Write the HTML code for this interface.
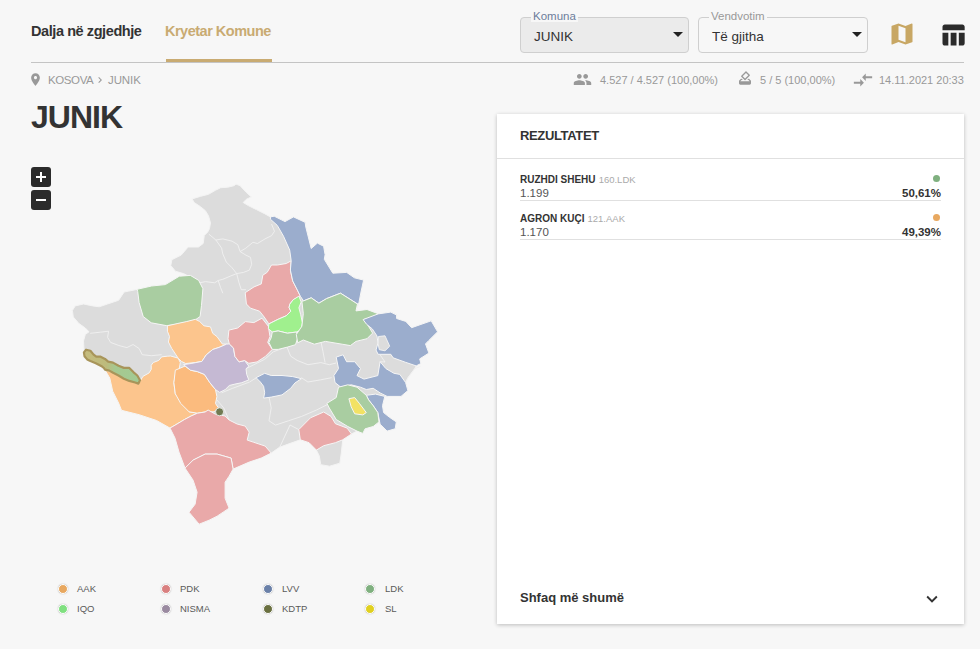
<!DOCTYPE html>
<html><head><meta charset="utf-8">
<style>
*{margin:0;padding:0;box-sizing:border-box}
html,body{width:980px;height:649px;overflow:hidden;background:#f7f7f7;font-family:"Liberation Sans",sans-serif;color:#333}
.abs{position:absolute;white-space:nowrap}
.tab1{left:31px;top:23px;font-size:14.5px;font-weight:bold;color:#333;letter-spacing:-0.42px}
.tab2{left:165px;top:23px;font-size:14.5px;font-weight:bold;color:#c9ab72;letter-spacing:-0.5px}
.uline{left:166px;top:59px;width:106px;height:3px;background:#c9ab72}
.hline{left:31px;top:62px;width:933px;height:1px;background:#c4c4c4}
.sel{border:1px solid #cfcfcf;border-radius:4px}
.lbl{font-size:11.5px;background:#f7f7f7;padding:0 2px}
.crumb{top:74px;font-size:11.5px;color:#999}
.title{left:31px;top:99px;font-size:32px;font-weight:bold;color:#333;letter-spacing:-1px}
.stat{font-size:11px;color:#999;top:74px}
.card{left:497px;top:114px;width:467px;height:510px;background:#fff;box-shadow:0 1px 4px rgba(0,0,0,.24)}
.zb{left:31px;width:20px;height:20px;background:#2b2b2b;border-radius:3px}
.leg{font-size:9.5px;color:#5a5a5a}
.dot{width:10px;height:10px;border-radius:50%;border:1.5px solid #fff;box-shadow:0 0 1.5px rgba(0,0,0,.28)}
</style></head><body>
<div class="abs tab1">Dalja në zgjedhje</div>
<div class="abs tab2">Kryetar Komune</div>
<div class="abs uline"></div>
<div class="abs hline"></div>

<!-- selects -->
<div class="abs sel" style="left:520px;top:17px;width:169px;height:36px;background:#ebebeb"></div>
<div class="abs lbl" style="left:531px;top:10px;color:#6d7d9b">Komuna</div>
<div class="abs" style="left:534px;top:29px;font-size:13.5px;color:#333">JUNIK</div>
<svg class="abs" style="left:673px;top:32px" width="10" height="6"><path d="M0 0h10L5 5z" fill="#222"/></svg>

<div class="abs sel" style="left:698px;top:17px;width:170px;height:36px;background:#f7f7f7"></div>
<div class="abs lbl" style="left:709px;top:10px;color:#999">Vendvotim</div>
<div class="abs" style="left:712px;top:29px;font-size:13.5px;color:#333">Të gjitha</div>
<svg class="abs" style="left:852px;top:32px" width="10" height="6"><path d="M0 0h10L5 5z" fill="#222"/></svg>

<svg class="abs" style="left:888px;top:20px" width="28" height="28" viewBox="0 0 24 24"><path fill="#c8a764" d="M20.5 3l-.16.03L15 5.1 9 3 3.36 4.9c-.21.07-.36.25-.36.48V20.5c0 .28.22.5.5.5l.16-.03L9 18.9l6 2.1 5.64-1.9c.21-.07.36-.25.36-.48V3.5c0-.28-.22-.5-.5-.5zM15 19l-6-2.11V5l6 2.11V19z"/></svg>
<svg class="abs" style="left:939px;top:21px" width="28" height="28" viewBox="0 0 24 24"><path fill="#2b2b2b" d="M10 10.02h5V21h-5zM17 21h3c1.1 0 2-.9 2-2v-9h-5v11zm3-18H5c-1.1 0-2 .9-2 2v3h19V5c0-1.1-.9-2-2-2zM3 19c0 1.1.9 2 2 2h3V10H3v9z"/></svg>

<!-- breadcrumb -->
<svg class="abs" style="left:28px;top:72px" width="15" height="15" viewBox="0 0 24 24"><path fill="#999" d="M12 2C8.13 2 5 5.13 5 9c0 5.25 7 13 7 13s7-7.75 7-13c0-3.87-3.13-7-7-7zm0 9.5c-1.38 0-2.5-1.12-2.5-2.5s1.12-2.5 2.5-2.5 2.5 1.12 2.5 2.5-1.12 2.5-2.5 2.5z"/></svg>
<div class="abs crumb" style="left:48px;letter-spacing:-0.4px">KOSOVA</div>
<svg class="abs" style="left:94px;top:74px" width="12" height="12" viewBox="0 0 24 24"><path fill="#999" d="M10 6L8.59 7.41 13.17 12l-4.58 4.59L10 18l6-6z"/></svg>
<div class="abs crumb" style="left:108px;letter-spacing:-0.1px">JUNIK</div>
<div class="abs title">JUNIK</div>

<!-- stats -->
<svg class="abs" style="left:573px;top:70px" width="19" height="19" viewBox="0 0 24 24"><path fill="#999" d="M16 11c1.66 0 2.99-1.34 2.99-3S17.66 5 16 5c-1.66 0-3 1.34-3 3s1.34 3 3 3zm-8 0c1.66 0 2.99-1.34 2.99-3S9.66 5 8 5C6.34 5 5 6.34 5 8s1.34 3 3 3zm0 2c-2.33 0-7 1.17-7 3.5V19h14v-2.5c0-2.33-4.67-3.5-7-3.5zm8 0c-.29 0-.62.02-.97.05 1.16.84 1.97 1.97 1.97 3.45V19h6v-2.5c0-2.33-4.67-3.5-7-3.5z"/></svg>
<div class="abs stat" style="left:600px">4.527 / 4.527 (100,00%)</div>
<svg class="abs" style="left:737px;top:70px" width="16" height="16" viewBox="0 0 24 24"><path fill="#999" d="M18 13h-.68l-2 2h1.91L19 17H5l1.78-2h2.05l-2-2H6l-3 3v4c0 1.1.89 2 1.99 2H19c1.1 0 2-.89 2-2v-4l-3-3zm-1-5.05l-4.95 4.95-3.54-3.54 4.95-4.95L17 7.95zm-4.24-5.66L6.39 8.66c-.39.39-.39 1.02 0 1.41l4.95 4.95c.39.39 1.02.39 1.41 0l6.36-6.36c.39-.39.39-1.02 0-1.41L14.16 2.3c-.38-.4-1.01-.4-1.4-.01z"/></svg>
<div class="abs stat" style="left:760px">5 / 5 (100,00%)</div>
<svg class="abs" style="left:852px;top:69px" width="22" height="22" viewBox="0 0 24 24"><path fill="#999" d="M9.01 14H2v2h7.01v3L13 15l-3.99-4v3zm5.98-1v-3H22V8h-7.01V5L11 9l3.99 4z"/></svg>
<div class="abs stat" style="left:879px">14.11.2021 20:33</div>

<!-- zoom -->
<div class="abs zb" style="top:167px"><svg width="20" height="20"><path d="M10 5v10M5 10h10" stroke="#fff" stroke-width="2"/></svg></div>
<div class="abs zb" style="top:190px"><svg width="20" height="20"><path d="M5 10h10" stroke="#fff" stroke-width="2"/></svg></div>

<!-- MAP -->
<svg class="abs" id="map" style="left:0;top:0" width="490" height="560" viewBox="0 0 490 560">
<polygon points="192.1,198.9 200.3,196.4 208.5,194.3 215.6,190.2 220.7,187.7 227.9,187.2 234.0,185.7 236.0,184.1 240.1,185.7 246.2,192.3 251.3,196.9 246.2,199.4 243.2,202.5 248.3,205.6 256.4,209.6 264.6,213.7 270.4,216.9 274.2,216.2 285.0,221.6 293.5,216.9 305.1,222.3 305.8,227.0 311.2,248.5 317.4,243.1 323.6,246.2 325.1,254.7 324.3,259.3 332.8,273.2 346.7,272.4 354.4,277.8 363.6,280.1 361.0,292.0 359.0,302.4 356.0,310.9 363.1,319.6 378.1,313.9 390.8,312.1 396.6,315.0 396.6,318.5 405.8,321.4 411.6,327.7 431.2,320.8 437.6,331.8 428.9,340.4 425.5,343.9 428.9,353.1 419.7,358.9 420.9,363.5 416.2,365.9 414.8,368.6 407.9,377.9 405.6,382.5 407.9,390.6 401.0,396.4 387.1,396.4 384.8,396.4 382.5,405.7 383.6,412.6 389.4,417.2 396.3,421.9 395.2,428.8 387.1,431.1 380.1,424.2 379.0,421.9 373.2,426.5 365.1,428.8 362.8,433.4 357.0,431.1 351.5,434.0 342.7,439.8 341.3,453.0 339.8,463.2 329.6,466.2 320.8,464.7 319.3,455.9 316.4,450.1 309.1,442.7 300.3,439.8 279.8,447.1 271.2,453.1 261.2,458.1 249.2,462.1 233.1,469.1 229.1,476.2 225.1,482.2 225.1,498.2 229.1,508.2 223.1,512.2 217.1,516.2 209.1,520.2 199.1,524.2 189.0,512.2 195.1,504.2 197.1,492.2 193.1,480.2 185.0,468.1 179.0,452.1 175.0,438.1 170.0,428.1 156.6,420.5 139.1,414.7 121.5,410.3 118.6,403.0 112.7,391.2 109.8,378.1 105.0,370.0 100.8,367.2 93.9,363.0 86.9,358.9 84.2,355.4 84.2,352.6 83.5,341.0 85.3,334.5 89.0,331.8 85.3,328.0 78.9,323.5 73.3,317.0 72.4,310.5 75.2,305.9 83.5,304.0 92.7,305.9 99.2,306.8 107.5,304.0 118.6,300.3 124.2,292.0 128.8,291.1 138.0,289.2 151.5,286.0 165.4,284.6 179.3,276.2 188.1,275.9 183.5,273.6 175.4,271.2 170.8,265.5 171.9,259.7 181.2,255.1 188.1,247.0 198.5,247.0 203.2,243.5 204.3,235.4 207.8,231.9 209.5,228.6 210.5,222.9 208.5,215.8 205.4,210.7 200.3,206.6 194.2,202.5" fill="#dcdcdc" stroke="#f4f4f4" stroke-width="1" stroke-linejoin="round"/>
<polyline points="208.9,234.2 215.9,240.0 221.6,248.1 222.8,253.9 226.3,262.0 232.1,267.8 236.7,273.6 230.9,275.9 222.8,279.3 218.2,280.5 214.7,282.8 205.5,281.6 199.7,282.8" fill="none" stroke="#f0f0f0" stroke-width="0.9" stroke-linejoin="round"/>
<polyline points="215.9,240.0 222.8,238.9 232.1,241.2 237.8,244.7 240.1,251.6 245.9,255.1 250.5,257.4 251.7,264.3 249.4,270.1 243.6,272.4 236.7,273.6" fill="none" stroke="#f0f0f0" stroke-width="0.9" stroke-linejoin="round"/>
<polyline points="240.1,251.6 245.9,248.1 252.9,242.3 257.5,243.5 265.0,238.9 271.5,235.7 274.5,231.3 271.5,224.0" fill="none" stroke="#f0f0f0" stroke-width="0.9" stroke-linejoin="round"/>
<polyline points="218.2,280.5 220.5,287.4 222.8,293.2" fill="none" stroke="#f0f0f0" stroke-width="0.9" stroke-linejoin="round"/>
<polyline points="236.7,273.6 239.0,282.8 241.3,289.7 245.9,289.7" fill="none" stroke="#f0f0f0" stroke-width="0.9" stroke-linejoin="round"/>
<polyline points="90.2,333.3 100.4,332.2 108.6,331.2 107.6,337.3 110.6,342.4 118.8,345.5 126.9,347.6 133.1,344.5 139.2,348.6 142.2,354.7 151.4,355.7 161.6,354.7" fill="none" stroke="#f0f0f0" stroke-width="0.9" stroke-linejoin="round"/>
<polyline points="245.3,369.0 253.9,364.7 264.7,359.3 273.3,351.8 282.0,348.5 294.9,343.1 303.5,338.8 314.3,341.0 325.1,338.8 333.7,341.0 350.0,345.0" fill="none" stroke="#f0f0f0" stroke-width="0.9" stroke-linejoin="round"/>
<polyline points="221.6,392.8 232.4,388.4 249.6,382.0 256.0,378.0" fill="none" stroke="#f0f0f0" stroke-width="0.9" stroke-linejoin="round"/>
<polyline points="217.0,400.0 223.7,407.9 229.1,420.0" fill="none" stroke="#f0f0f0" stroke-width="0.9" stroke-linejoin="round"/>
<polyline points="269.0,397.0 271.2,407.9 269.0,420.8 275.5,425.1 288.4,420.8 301.4,416.5 316.5,410.0 329.4,403.5" fill="none" stroke="#f0f0f0" stroke-width="0.9" stroke-linejoin="round"/>
<polyline points="301.4,377.7 307.9,382.0 320.8,379.8 331.6,377.7" fill="none" stroke="#f0f0f0" stroke-width="0.9" stroke-linejoin="round"/>
<polyline points="286.3,345.3 290.6,356.1 297.1,360.4 307.9,364.7 320.8,362.6 329.4,364.7 336.0,363.0" fill="none" stroke="#f0f0f0" stroke-width="0.9" stroke-linejoin="round"/>
<polyline points="320.8,341.0 323.0,351.8 325.1,362.6" fill="none" stroke="#f0f0f0" stroke-width="0.9" stroke-linejoin="round"/>
<polyline points="298.8,429.6 290.0,425.0 279.8,447.1" fill="none" stroke="#f0f0f0" stroke-width="0.9" stroke-linejoin="round"/>
<polyline points="380.1,354.8 385.0,362.0 380.1,361.7" fill="none" stroke="#f0f0f0" stroke-width="0.9" stroke-linejoin="round"/>
<polyline points="420.6,366.3 414.8,368.6 407.9,377.9 405.6,382.5" fill="none" stroke="#f0f0f0" stroke-width="0.9" stroke-linejoin="round"/>
<polygon points="137.1,289.3 151.5,286.0 165.4,284.6 179.3,276.2 190.4,275.4 198.7,280.4 202.9,288.7 201.5,305.4 200.1,316.5 195.4,319.8 186.8,322.2 177.0,324.6 166.3,325.6 151.2,322.8 143.2,316.5 139.1,302.6 137.7,291.5" fill="#a9cda1" stroke="#f6f6f6" stroke-width="1" stroke-linejoin="round"/>
<polygon points="167.4,325.8 177.1,323.6 186.8,321.5 195.4,319.3 199.7,321.5 204.0,325.8 210.5,326.9 212.7,333.3 217.0,336.6 222.4,344.1 226.7,344.1 219.1,347.4 212.7,349.5 206.2,354.9 201.9,361.4 195.4,362.5 185.7,363.5 181.4,361.4 178.1,358.1 176.0,354.9 171.7,348.4 168.4,342.0 169.5,336.6 167.4,331.2" fill="#fcc58d" stroke="#f6f6f6" stroke-width="1" stroke-linejoin="round"/>
<polygon points="151.2,365.3 153.3,362.5 158.8,360.4 161.6,356.9 167.2,356.2 170.6,356.0 178.1,358.1 180.3,362.5 179.2,368.9 175.3,375.0 173.9,382.7 175.3,393.8 183.0,403.0 189.1,411.8 197.4,413.2 191.1,416.0 184.5,419.5 177.0,424.0 170.0,428.1 156.6,420.5 139.1,414.7 121.5,410.3 118.6,403.0 112.7,391.2 109.8,378.1 105.0,370.0 111.9,372.0 121.7,376.9 128.6,380.4 135.6,382.5 139.7,381.8 142.9,376.4 149.1,372.9 151.2,369.4" fill="#fcc58d" stroke="#f6f6f6" stroke-width="1" stroke-linejoin="round"/>
<polygon points="175.3,370.2 185.0,366.1 190.5,370.2 197.4,371.6 204.4,374.4 209.9,382.7 215.5,389.6 216.9,396.6 215.5,403.5 218.3,407.7 214.1,411.8 205.8,411.8 197.4,413.2 189.1,411.8 180.8,403.5 175.3,393.8 173.9,382.7" fill="#fbbb7e" stroke="#f6f6f6" stroke-width="1" stroke-linejoin="round"/>
<polygon points="183.5,364.6 191.1,363.5 201.9,361.4 206.2,354.9 212.7,349.5 219.1,347.4 226.7,344.1 229.3,343.9 233.5,348.0 234.9,356.4 239.1,361.9 244.6,360.5 248.8,366.1 246.0,368.8 246.7,374.4 248.8,379.9 241.8,382.7 234.9,384.1 229.3,385.5 225.2,389.6 219.6,392.4 215.5,389.6 209.9,382.7 204.4,374.4 197.4,371.6 190.5,370.2" fill="#c5b9d3" stroke="#f6f6f6" stroke-width="1" stroke-linejoin="round"/>
<polygon points="170.0,428.1 177.0,424.0 184.5,419.5 191.1,416.0 197.4,413.2 205.1,412.0 208.1,410.0 215.1,414.0 225.1,416.0 229.1,420.0 237.1,424.0 245.2,426.1 249.2,432.1 247.2,440.1 253.2,442.1 265.2,446.1 271.2,453.1 261.2,458.1 249.2,462.1 233.1,469.1 231.1,458.1 217.1,454.1 205.1,454.1 193.1,460.1 185.0,468.1 179.0,452.1 175.0,438.1" fill="#e9a9a9" stroke="#f6f6f6" stroke-width="1" stroke-linejoin="round"/>
<polygon points="185.0,468.1 193.1,460.1 205.1,454.1 217.1,454.1 231.1,458.1 233.1,469.1 229.1,476.2 225.1,482.2 225.1,498.2 229.1,508.2 223.1,512.2 217.1,516.2 209.1,520.2 199.1,524.2 189.0,512.2 195.1,504.2 197.1,492.2 193.1,480.2" fill="#e9a9a9" stroke="#f6f6f6" stroke-width="1" stroke-linejoin="round"/>
<polygon points="271.5,265.0 277.4,265.0 286.2,263.5 291.2,260.8 290.4,270.1 292.7,280.9 297.4,290.1 300.4,296.3 293.2,299.7 289.7,304.3 289.1,307.7 290.8,311.2 286.2,315.8 278.1,319.3 268.9,323.9 264.2,317.0 259.6,311.2 250.5,308.2 246.4,304.0 245.2,292.7 254.0,286.9 261.3,283.9 262.8,275.2 267.2,272.3" fill="#e9a9a9" stroke="#f6f6f6" stroke-width="1" stroke-linejoin="round"/>
<polygon points="228.9,330.1 237.7,328.0 245.3,321.6 253.9,322.6 262.0,318.2 268.3,326.2 270.0,336.6 267.7,342.4 272.3,349.4 265.4,356.4 257.1,361.9 248.8,363.3 244.6,360.5 239.1,361.9 234.9,356.4 233.5,348.0 229.3,343.9 228.0,338.8" fill="#e9a9a9" stroke="#f6f6f6" stroke-width="1" stroke-linejoin="round"/>
<polygon points="298.8,429.6 310.5,417.8 323.7,412.0 331.0,416.4 335.4,423.7 347.1,428.1 351.5,434.0 342.7,439.8 335.4,442.7 323.7,445.7 316.4,450.1 309.1,442.7 300.3,439.8" fill="#e9a9a9" stroke="#f6f6f6" stroke-width="1" stroke-linejoin="round"/>
<polygon points="270.4,216.9 274.2,216.2 285.0,221.6 293.5,216.9 305.1,222.3 305.8,227.0 311.2,248.5 317.4,243.1 323.6,246.2 325.1,254.7 324.3,259.3 332.8,273.2 346.7,272.4 354.4,277.8 363.6,280.1 361.0,292.0 359.0,302.4 357.5,304.0 340.5,293.2 326.6,298.6 318.9,303.2 311.2,297.8 303.5,300.9 300.4,296.3 297.4,290.1 292.7,280.9 290.4,270.1 291.2,260.8 289.7,250.1 283.5,236.2 277.3,225.4 270.4,219.2" fill="#9badcd" stroke="#f6f6f6" stroke-width="1" stroke-linejoin="round"/>
<polygon points="289.7,304.3 293.2,299.7 298.9,296.2 301.2,302.0 298.9,307.7 300.7,314.7 302.4,322.8 301.2,329.7 296.6,332.0 287.4,333.2 278.1,330.9 272.3,332.0 268.3,328.6 268.9,323.9 278.1,319.3 286.2,315.8 290.8,311.2 289.1,307.7" fill="#a0f08e" stroke="#f6f6f6" stroke-width="1" stroke-linejoin="round"/>
<polygon points="272.3,332.0 278.1,330.9 287.4,333.2 296.6,332.0 297.8,337.8 295.5,344.7 287.4,347.1 278.1,349.4 272.3,349.4 268.9,342.4 271.2,337.8" fill="#a9cda1" stroke="#f6f6f6" stroke-width="1" stroke-linejoin="round"/>
<polygon points="301.9,301.2 303.5,300.9 311.2,297.8 318.9,303.2 326.6,298.6 340.5,293.2 357.5,304.0 356.0,310.9 367.0,309.5 378.2,313.7 375.4,317.9 364.3,319.2 372.6,333.1 367.0,338.7 356.0,341.4 350.4,345.6 342.1,344.2 325.4,341.4 314.3,344.2 303.3,340.0 297.7,342.8 296.3,334.5 301.9,326.2 303.3,313.7" fill="#a9cda1" stroke="#f6f6f6" stroke-width="1" stroke-linejoin="round"/>
<polygon points="363.1,319.6 378.1,313.9 390.8,312.1 396.6,315.0 396.6,318.5 405.8,321.4 411.6,327.7 431.2,320.8 437.6,331.8 428.9,340.4 425.5,343.9 428.9,353.1 419.7,358.9 420.9,363.5 416.2,365.9 405.8,362.4 393.1,357.8 390.8,354.3 378.1,354.3 376.0,350.0 378.0,343.0 377.0,336.0 372.3,328.9 366.6,324.3" fill="#9badcd" stroke="#f6f6f6" stroke-width="1" stroke-linejoin="round"/>
<polygon points="256.1,377.7 264.7,373.3 271.2,375.5 282.0,375.5 292.8,376.6 301.4,378.7 294.9,383.0 290.6,388.4 282.0,394.9 271.2,397.1 263.6,398.1 264.7,392.8 263.6,386.3 260.4,382.0" fill="#9badcd" stroke="#f6f6f6" stroke-width="1" stroke-linejoin="round"/>
<polygon points="336.2,357.1 343.1,354.8 346.6,361.7 354.7,361.7 360.5,368.6 357.0,375.6 364.0,379.1 377.8,375.6 380.1,361.7 385.9,368.6 394.0,373.3 399.8,374.4 405.6,382.5 407.9,390.6 401.0,396.4 387.1,396.4 380.1,392.9 373.2,388.3 366.3,389.5 360.5,387.2 351.2,384.8 340.8,387.2 335.0,382.5 333.9,375.6 338.5,368.6" fill="#9badcd" stroke="#f6f6f6" stroke-width="1" stroke-linejoin="round"/>
<polygon points="366.3,395.3 375.5,394.1 384.8,396.4 382.5,405.7 383.6,412.6 389.4,417.2 396.3,421.9 395.2,428.8 387.1,431.1 380.1,424.2 377.8,412.6 373.2,405.7 368.6,399.9" fill="#9badcd" stroke="#f6f6f6" stroke-width="1" stroke-linejoin="round"/>
<polygon points="338.5,387.2 347.8,384.8 357.0,387.2 366.3,395.3 368.6,399.9 373.2,405.7 377.8,412.6 379.0,421.9 373.2,426.5 365.1,428.8 362.8,433.4 357.0,431.1 347.8,426.5 336.2,419.5 329.3,408.0 326.9,403.3 336.2,397.6" fill="#a9cda1" stroke="#f6f6f6" stroke-width="1" stroke-linejoin="round"/>
<polygon points="348.9,398.7 354.7,397.6 359.3,403.3 366.3,412.6 362.8,414.9 354.7,413.8 351.2,406.8" fill="#f2e264" stroke="#f6f6f6" stroke-width="1" stroke-linejoin="round"/>
<polygon points="378.5,336.5 385,335.8 389.7,346.2 385,350.8 379.3,349.7 378.1,343.9" fill="#dcdcdc" stroke="#f4f4f4" stroke-width="0.9"/>
<circle cx="219.6" cy="411.8" r="4" fill="#707a52" stroke="#f6f6f6" stroke-width="0.8"/>
<defs><linearGradient id="jg" x1="0" y1="0" x2="1" y2="0"><stop offset="0" stop-color="#c6bc7e"/><stop offset="0.4" stop-color="#bdbb7c"/><stop offset="0.55" stop-color="#a6c890"/><stop offset="1" stop-color="#a2cb94"/></linearGradient></defs>
<polygon points="83.9,352.4 86.1,349.7 90.4,350.8 93.6,354.6 96.3,356.7 100.6,356.7 105.0,358.9 108.2,361.6 113.0,362.6 118.5,365.8 123.9,367.9 129.3,367.9 133.6,372.3 137.3,375.5 140.0,380.3 138.4,383.6 135.2,382.5 129.3,380.9 123.9,378.7 118.5,375.5 113.1,372.8 109.3,370.6 105.0,369.6 103.9,368.0 101.2,365.9 95.8,363.2 90.4,361.0 87.2,359.4 84.5,356.2" fill="url(#jg)" stroke="#a8955a" stroke-width="2.2" stroke-linejoin="round"/>
</svg>

<!-- legend -->
<div class="abs dot" style="left:57.5px;top:583.5px;background:#e8a860"></div><div class="abs leg" style="left:77px;top:583px">AAK</div>
<div class="abs dot" style="left:160.5px;top:583.5px;background:#d98080"></div><div class="abs leg" style="left:180px;top:583px">PDK</div>
<div class="abs dot" style="left:262.5px;top:583.5px;background:#6a80a8"></div><div class="abs leg" style="left:282px;top:583px">LVV</div>
<div class="abs dot" style="left:365px;top:583.5px;background:#7fb07f"></div><div class="abs leg" style="left:385px;top:583px">LDK</div>
<div class="abs dot" style="left:57.5px;top:603.5px;background:#80e080"></div><div class="abs leg" style="left:77px;top:603px">IQO</div>
<div class="abs dot" style="left:160.5px;top:603.5px;background:#9a8aa0"></div><div class="abs leg" style="left:180px;top:603px">NISMA</div>
<div class="abs dot" style="left:262.5px;top:603.5px;background:#6a7040"></div><div class="abs leg" style="left:282px;top:603px">KDTP</div>
<div class="abs dot" style="left:365px;top:603.5px;background:#e0d020"></div><div class="abs leg" style="left:385px;top:603px">SL</div>

<!-- card -->
<div class="abs card">
  <div class="abs" style="left:23px;top:14px;font-size:13px;font-weight:bold;color:#333;letter-spacing:-0.35px">REZULTATET</div>
  <div class="abs" style="left:0;top:44px;width:467px;height:1px;background:#e0e0e0"></div>

  <div class="abs" style="left:23px;top:59px;font-size:11px;color:#333"><b style="font-size:10px">RUZHDI SHEHU</b> <span style="font-size:9.5px;color:#aaa">160.LDK</span></div>
  <div class="abs" style="left:23px;top:73px;font-size:11.5px;color:#555">1.199</div>
  <div class="abs" style="left:436px;top:61px;width:7px;height:7px;border-radius:50%;background:#7fb07f"></div>
  <div class="abs" style="right:23px;top:73px;font-size:11.5px;font-weight:bold;color:#333">50,61%</div>
  <div class="abs" style="left:23px;top:86px;width:421px;height:1px;background:#e0e0e0"></div>

  <div class="abs" style="left:23px;top:98px;font-size:11px;color:#333"><b style="font-size:10px">AGRON KUÇI</b> <span style="font-size:9.5px;color:#aaa">121.AAK</span></div>
  <div class="abs" style="left:23px;top:112px;font-size:11.5px;color:#555">1.170</div>
  <div class="abs" style="left:436px;top:100px;width:7px;height:7px;border-radius:50%;background:#e8a860"></div>
  <div class="abs" style="right:23px;top:112px;font-size:11.5px;font-weight:bold;color:#333">49,39%</div>
  <div class="abs" style="left:23px;top:125px;width:421px;height:1px;background:#e0e0e0"></div>

  <div class="abs" style="left:23px;top:476px;font-size:13px;font-weight:bold;color:#333">Shfaq më shumë</div>
  <svg class="abs" style="left:424px;top:474px" width="22" height="22" viewBox="0 0 24 24"><path fill="#333" d="M7.41 8.59L12 13.17l4.59-4.58L18 10l-6 6-6-6 1.41-1.41z"/></svg>
</div>
</body></html>
